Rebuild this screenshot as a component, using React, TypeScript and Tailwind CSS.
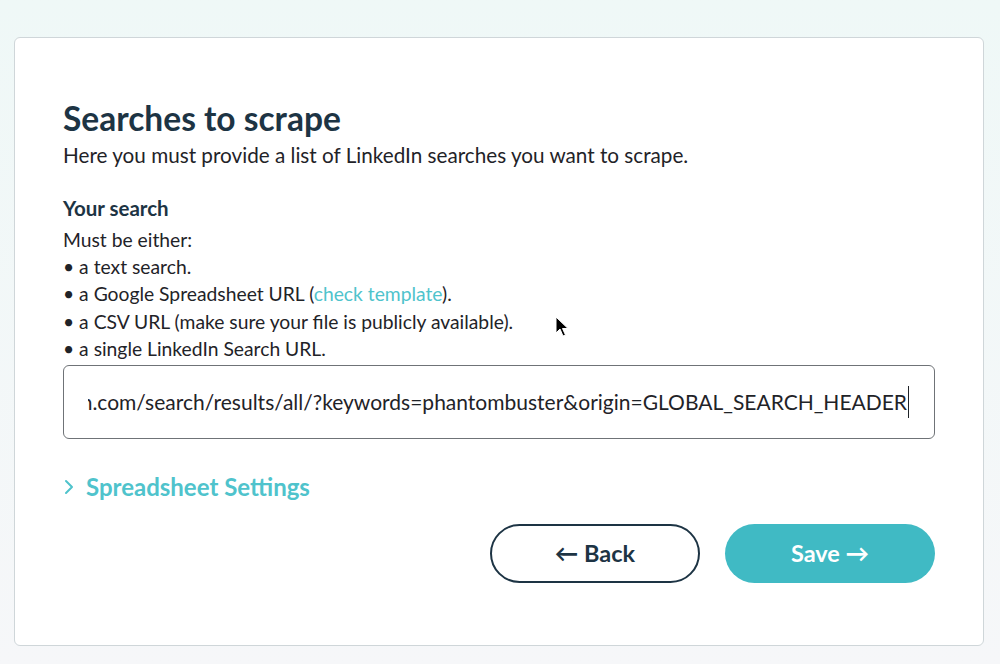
import * as React from "react";
import { ChevronRight } from "lucide-react";

const URL =
  "https://www.linkedin.com/search/results/all/?keywords=phantombuster&origin=GLOBAL_SEARCH_HEADER";

export default function App() {
  return (
    <div
      className="relative h-[664px] w-[1000px] overflow-hidden bg-gradient-to-b from-[#eff8f7] to-[#f6f7f9] pt-[37px] pl-[14px] pr-[16px]"
      style={{ fontFamily: "Lato, 'Open Sans', sans-serif" }}
    >
      <div className="h-[609px] rounded-md border border-[#cfd6d9] bg-white pl-[48px] pr-[48px] pt-[60px]">
        <h1 className="text-[33.5px] font-bold leading-[40px] text-[#1d3444]">Searches to scrape</h1>
        <p className="mt-[3px] text-[20.7px] leading-[28px] text-[#1f2328]">
          Here you must provide a list of LinkedIn searches you want to scrape.
        </p>

        <h2 className="mt-[26px] text-[20.5px] font-bold leading-[27px] text-[#1d3444]">Your search</h2>
        <div className="mt-[4px] text-[19.3px] leading-[27.2px] text-[#1f2328]">
          <p>Must be either:</p>
          <p>• a text search.</p>
          <p>
            • a Google Spreadsheet URL (<span className="text-[#4fc3cc]">check template</span>).
          </p>
          <p>• a CSV URL (make sure your file is publicly available).</p>
          <p>• a single LinkedIn Search URL.</p>
        </div>

        <div className="mt-[3px] flex h-[74px] items-center rounded-md border border-[#6f7377] pl-[24px] pr-[25px]">
          <div className="flex min-w-0 flex-1 justify-end overflow-hidden whitespace-nowrap text-[21px] text-[#1f2328]">
            <span className="shrink-0 border-r border-[#1f2328] pr-[1px]">{URL}</span>
          </div>
        </div>

        <button className="mt-[33px] flex h-[30px] items-center gap-[8px] text-[24px] font-bold text-[#4fc3cc]">
          <ChevronRight className="-ml-[6px] h-[24px] w-[24px]" strokeWidth={2} />
          <span className="-ml-[3px]">Spreadsheet Settings</span>
        </button>

        <div className="mt-[22px] flex justify-end gap-[25px]">
          <button className="flex h-[59px] w-[210px] items-center justify-center rounded-full border-2 border-[#1d3444] text-[23.5px] font-bold text-[#1d3444]">
            ← Back
          </button>
          <button className="flex h-[59px] w-[210px] items-center justify-center rounded-full bg-[#40bac4] text-[23.5px] font-bold text-white">
            Save →
          </button>
        </div>
      </div>

      <svg className="absolute left-[555px] top-[316px]" width="14" height="22" viewBox="0 0 14 22">
        <path d="M1 1 L1 17 L5 13 L8 20 L10.5 19 L7.5 12.5 L13 12.5 Z" fill="#000" stroke="#fff" strokeWidth="1" />
      </svg>
    </div>
  );
}
